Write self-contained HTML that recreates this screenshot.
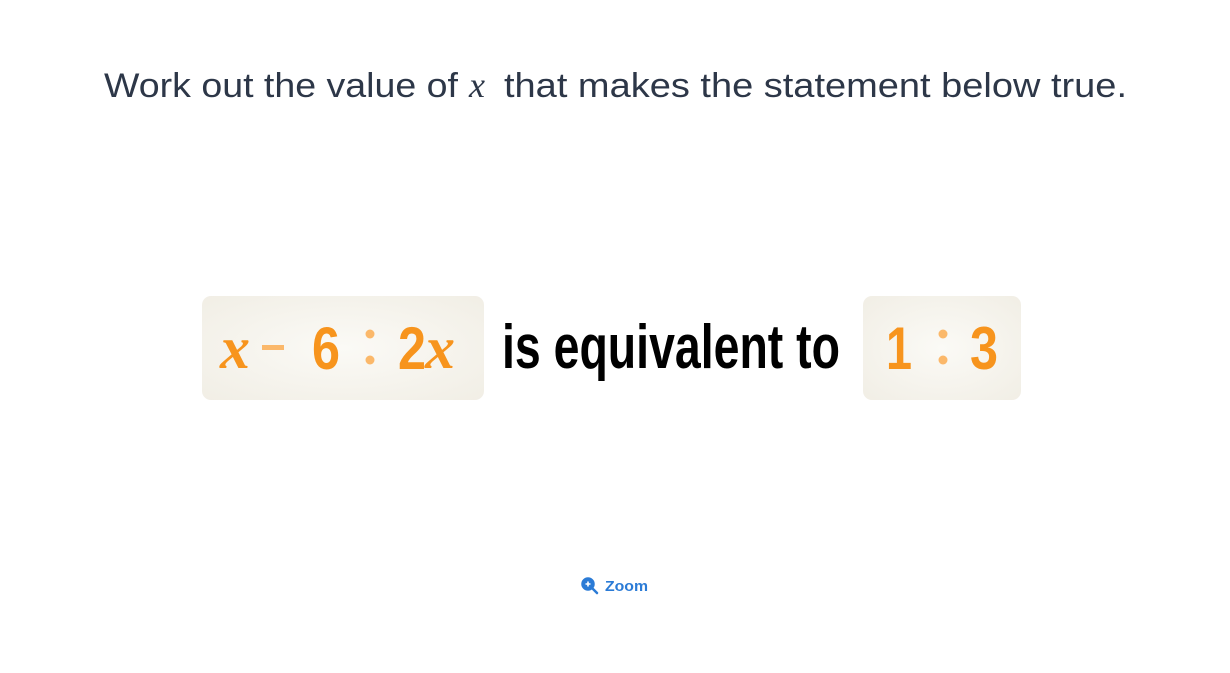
<!DOCTYPE html>
<html><head><meta charset="utf-8"><style>
body{margin:0;width:1230px;height:673px;background:#fff;overflow:hidden;position:relative;font-family:"Liberation Sans",sans-serif}
.box{position:absolute;top:296px;height:104px;border-radius:9px;background:radial-gradient(ellipse at center,#fbfaf6 0%,#f1eee5 100%)}
</style></head><body>
<div class="box" style="left:202px;width:282px"></div>
<div class="box" style="left:863px;width:158px"></div>
<svg style="position:absolute;left:0;top:0" width="1230" height="673">
<text y="97" fill="#2d3748" font-family="Liberation Sans, sans-serif" font-size="34"><tspan x="104" textLength="354" lengthAdjust="spacingAndGlyphs">Work out the value of</tspan><tspan x="469" font-family="Liberation Serif, serif" font-style="italic" font-size="36">x</tspan><tspan x="504" textLength="623" lengthAdjust="spacingAndGlyphs">that makes the statement below true.</tspan></text>
<g fill="#f7941d" font-family="Liberation Sans Narrow, Liberation Sans, sans-serif" font-weight="bold" font-size="60">
<text x="220" y="368" font-family="Liberation Serif, serif" font-style="italic" font-size="60">x</text>
<rect x="262" y="345" width="22" height="5" fill="#fbb86a"/>
<text x="312" y="369" textLength="28" lengthAdjust="spacingAndGlyphs">6</text>
<circle cx="370" cy="334" r="4.5" fill="#fbb86a"/><circle cx="370" cy="360" r="4.5" fill="#fbb86a"/>
<text x="398" y="369" textLength="28" lengthAdjust="spacingAndGlyphs">2</text>
<text x="425" y="368" font-family="Liberation Serif, serif" font-style="italic" font-size="60">x</text>
<text x="886" y="369" textLength="26" lengthAdjust="spacingAndGlyphs">1</text>
<circle cx="943" cy="334" r="4.5" fill="#fbb86a"/><circle cx="943" cy="360" r="4.5" fill="#fbb86a"/>
<text x="970" y="369" textLength="28" lengthAdjust="spacingAndGlyphs">3</text>
</g>
<text x="502" y="368" fill="#000" font-family="Liberation Sans Narrow, Liberation Sans, sans-serif" font-weight="bold" font-size="62" textLength="338" lengthAdjust="spacingAndGlyphs">is equivalent to</text>
<g fill="none" stroke="#2b7bd6" stroke-width="2.5"><circle cx="588" cy="584" r="5.5" fill="#2b7bd6"/><line x1="592" y1="588" x2="597" y2="593" stroke-linecap="round"/></g>
<path d="M585.5 584h5M588 581.5v5" stroke="#fff" stroke-width="1.6"/>
<text x="605" y="591" fill="#2b7bd6" font-family="Liberation Sans, sans-serif" font-weight="bold" font-size="15" textLength="43" lengthAdjust="spacingAndGlyphs">Zoom</text>
</svg>
</body></html>
